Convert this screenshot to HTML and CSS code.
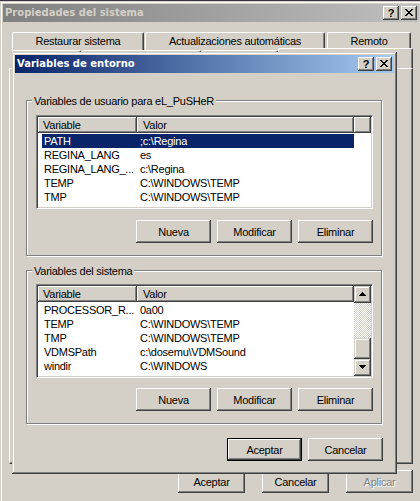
FILE: index.html
```html
<!DOCTYPE html>
<html lang="es">
<head>
<meta charset="utf-8">
<title>Variables de entorno</title>
<link rel="stylesheet" href="styles.css">
</head>
<body>
<div class="desktop">

  <div class="window outer">
    <div class="titlebar inactive">
      <span class="title-text">Propiedades del sistema</span>
      <div class="title-buttons">
        <span class="tbtn help">?</span>
        <span class="tbtn close"><svg width="8" height="7" viewBox="0 0 8 7"><path d="M0 0h2v1H0zM6 0h2v1H6zM1 1h2v1H1zM5 1h2v1H5zM2 2h4v1H2zM3 3h2v1H3zM2 4h4v1H2zM1 5h2v1H1zM5 5h2v1H5zM0 6h2v1H0zM6 6h2v1H6z" fill="#000"/></svg></span>
      </div>
    </div>
    <div class="outer-body">
      <div class="tab-rows">
        <div class="tab-row">
          <div class="tab t1">Restaurar sistema</div>
          <div class="tab t2">Actualizaciones automáticas</div>
          <div class="tab t3">Remoto</div>
        </div>
        <div class="tab-row">
          <div class="tab r2a"></div>
          <div class="tab r2b"></div>
          <div class="tab r2c"></div>
          <div class="tab r2d selected"></div>
        </div>
      </div>
      <div class="tab-panel"></div>
      <div class="outer-buttons">
        <button class="btn">Aceptar</button>
        <button class="btn">Cancelar</button>
        <button class="btn disabled">Aplicar</button>
      </div>
    </div>
  </div>

  <div class="window inner">
    <div class="titlebar active">
      <span class="title-text">Variables de entorno</span>
      <div class="title-buttons">
        <span class="tbtn help">?</span>
        <span class="tbtn close"><svg width="8" height="7" viewBox="0 0 8 7"><path d="M0 0h2v1H0zM6 0h2v1H6zM1 1h2v1H1zM5 1h2v1H5zM2 2h4v1H2zM3 3h2v1H3zM2 4h4v1H2zM1 5h2v1H1zM5 5h2v1H5zM0 6h2v1H0zM6 6h2v1H6z" fill="#000"/></svg></span>
      </div>
    </div>
    <div class="inner-body">

      <div class="group user">
        <span class="group-label">Variables de usuario para eL_PuSHeR</span>
        <div class="listview">
          <div class="lv-main">
            <div class="lv-header">
              <div class="hcell c1">Variable</div>
              <div class="hcell c2">Valor</div>
              <div class="hcell filler"></div>
            </div>
            <div class="lv-rows">
              <div class="row sel"><span class="cell c1">PATH</span><span class="cell c2">;c:\Regina</span></div>
              <div class="row"><span class="cell c1">REGINA_LANG</span><span class="cell c2">es</span></div>
              <div class="row"><span class="cell c1">REGINA_LANG_...</span><span class="cell c2">c:\Regina</span></div>
              <div class="row"><span class="cell c1">TEMP</span><span class="cell c2">C:\WINDOWS\TEMP</span></div>
              <div class="row"><span class="cell c1">TMP</span><span class="cell c2">C:\WINDOWS\TEMP</span></div>
            </div>
          </div>
        </div>
        <div class="btn-row">
          <button class="btn">Nueva</button>
          <button class="btn">Modificar</button>
          <button class="btn">Eliminar</button>
        </div>
      </div>

      <div class="group sys">
        <span class="group-label">Variables del sistema</span>
        <div class="listview">
          <div class="lv-main">
            <div class="lv-header">
              <div class="hcell c1">Variable</div>
              <div class="hcell c2">Valor</div>
            </div>
            <div class="lv-rows">
              <div class="row"><span class="cell c1">PROCESSOR_R...</span><span class="cell c2">0a00</span></div>
              <div class="row"><span class="cell c1">TEMP</span><span class="cell c2">C:\WINDOWS\TEMP</span></div>
              <div class="row"><span class="cell c1">TMP</span><span class="cell c2">C:\WINDOWS\TEMP</span></div>
              <div class="row"><span class="cell c1">VDMSPath</span><span class="cell c2">c:\dosemu\VDMSound</span></div>
              <div class="row"><span class="cell c1">windir</span><span class="cell c2">C:\WINDOWS</span></div>
            </div>
          </div>
          <div class="scrollbar">
            <div class="sb-btn"><svg width="7" height="4" viewBox="0 0 7 4"><path d="M3 0h1v1H3zM2 1h3v1H2zM1 2h5v1H1zM0 3h7v1H0z" fill="#000"/></svg></div>
            <div class="sb-track"></div>
            <div class="sb-thumb"></div>
            <div class="sb-btn"><svg width="7" height="4" viewBox="0 0 7 4"><path d="M0 0h7v1H0zM1 1h5v1H1zM2 2h3v1H2zM3 3h1v1H3z" fill="#000"/></svg></div>
          </div>
        </div>
        <div class="btn-row">
          <button class="btn">Nueva</button>
          <button class="btn">Modificar</button>
          <button class="btn">Eliminar</button>
        </div>
      </div>

      <div class="dialog-buttons">
        <button class="btn default">Aceptar</button>
        <button class="btn">Cancelar</button>
      </div>

    </div>
  </div>

</div>
</body>
</html>
```

FILE: styles.css
```css
* { box-sizing: border-box; }

html, body { margin: 0; padding: 0; }

body {
  width: 420px;
  height: 501px;
  overflow: hidden;
  background: #3a3441;
  font-family: "Liberation Sans", Arial, sans-serif;
  font-size: 11px;
  letter-spacing: -0.25px;
  color: #000;
}

.desktop {
  position: relative;
  width: 420px;
  height: 501px;
  overflow: hidden;
}

/* ---------- windows ---------- */
.window {
  position: absolute;
  display: flex;
  flex-direction: column;
  padding: 3px;
  background: #d4d0c8;
  box-shadow: inset -1px -1px #404040, inset 1px 1px #d4d0c8,
              inset -2px -2px #808080, inset 2px 2px #fff;
}

.outer { left: 0; top: 1px; width: 422px; height: 510px; }
.inner { left: 12px; top: 52px; width: 385px; height: 422px; }

.titlebar {
  flex: none;
  height: 18px;
  display: flex;
  align-items: center;
  padding: 0 2px;
}
.titlebar.active { background: linear-gradient(to right, #0a246a, #a6caf0); }
.titlebar.inactive { background: linear-gradient(to right, #808080, #c0c0c0); }

.title-text {
  flex: 1;
  font-family: "DejaVu Sans", sans-serif;
  font-weight: bold;
  font-size: 10px;
  letter-spacing: 0;
  line-height: 18px;
  white-space: nowrap;
}
.active .title-text { color: #fff; }
.inactive .title-text { color: #d4d0c8; }

.title-buttons { display: flex; gap: 2px; }

.tbtn {
  width: 16px;
  height: 14px;
  display: flex;
  align-items: center;
  justify-content: center;
  background: #d4d0c8;
  box-shadow: inset -1px -1px #404040, inset 1px 1px #fff,
              inset -2px -2px #808080, inset 2px 2px #d4d0c8;
}
.tbtn.help {
  font-family: "Liberation Sans", Arial, sans-serif;
  font-weight: bold;
  font-size: 11px;
  line-height: 14px;
  letter-spacing: 0;
  color: #000;
  padding-bottom: 1px;
}
.tbtn.close svg { display: block; margin-top: -1px; }

/* ---------- outer dialog body ---------- */
.outer-body {
  display: flex;
  flex-direction: column;
  padding: 10px 6px 0;
}

.tab-rows { padding-left: 3px; }

.tab-row { display: flex; height: 18px; }

.tab {
  height: 18px;
  line-height: 17px;
  text-align: center;
  white-space: nowrap;
  background: #d4d0c8;
  border-top: 1px solid #fff;
  border-left: 1px solid #fff;
  border-right: 1px solid #404040;
  border-radius: 2px 2px 0 0;
  box-shadow: inset -1px 0 #808080;
}
.t1 { width: 132px; margin-right: 1px; }
.t2 { width: 180px; margin-right: 2px; }
.t3 { width: 84px; }

.r2a { width: 69px; margin-right: 1px; }
.r2b { width: 119px; margin-right: 1px; }
.r2c { width: 76px; }
.r2d { width: 135px; }
.tab.selected { height: 20px; margin-top: -2px; }

.tab-panel {
  height: 396px;
  background: #d4d0c8;
  border-top: 1px solid #fff;
  border-left: 1px solid #fff;
  border-right: 1px solid #404040;
  border-bottom: 1px solid #404040;
  box-shadow: inset -1px -1px #808080;
}

.outer-buttons {
  display: flex;
  justify-content: flex-end;
  gap: 17px;
  margin-top: 6px;
}
.outer-buttons .btn { width: 67px; }

/* ---------- buttons ---------- */
.btn {
  width: 75px;
  height: 23px;
  padding: 0;
  border: 0;
  margin: 0;
  font: inherit;
  letter-spacing: inherit;
  color: #000;
  background: #d4d0c8;
  box-shadow: inset -1px -1px #404040, inset 1px 1px #fff,
              inset -2px -2px #808080, inset 2px 2px #d4d0c8;
}
.btn.default { border: 1px solid #000; }
.btn.disabled { color: #808080; text-shadow: 1px 1px 0 #fff; }

/* ---------- inner dialog body ---------- */
.inner-body {
  display: flex;
  flex-direction: column;
  padding: 27px 12px 0 11px;
}

.group {
  position: relative;
  display: flex;
  flex-direction: column;
  border: 1px solid #808080;
  box-shadow: inset 1px 1px #fff, 1px 1px #fff;
  padding: 14px 8px 12px 9px;
}
.group.sys { margin-top: 14px; padding-top: 13px; }
.group.sys .btn-row { margin-top: 10px; }

.group-label {
  position: absolute;
  top: -6px;
  left: 5px;
  padding: 0 2px;
  line-height: 13px;
  background: #d4d0c8;
  white-space: nowrap;
}

.btn-row {
  display: flex;
  justify-content: flex-end;
  gap: 6px;
  margin-top: 11px;
}

.dialog-buttons {
  display: flex;
  justify-content: flex-end;
  gap: 6px;
  margin: 14px -1px 0 0;
}

/* ---------- list view ---------- */
.listview {
  height: 94px;
  display: flex;
  padding: 1px;
  background: #fff;
  border: 1px solid;
  border-color: #808080 #fff #fff #808080;
  box-shadow: inset 1px 1px #404040, inset -1px -1px #d4d0c8;
}

.lv-main {
  flex: 1;
  min-width: 0;
  display: flex;
  flex-direction: column;
  overflow: hidden;
}

.lv-header { flex: none; display: flex; height: 16px; }

.hcell {
  height: 16px;
  line-height: 16px;
  white-space: nowrap;
  background: #d4d0c8;
  box-shadow: inset -1px -1px #404040, inset 1px 1px #fff,
              inset -2px -2px #808080;
}
.hcell.c1 { width: 99px; padding-left: 5px; }
.hcell.c2 { width: 217px; padding-left: 6px; }
.hcell.filler { flex: 1; }

.lv-rows { padding-top: 1px; }

.row {
  display: flex;
  width: 312px;
  height: 14px;
  line-height: 14px;
  margin-left: 4px;
  white-space: nowrap;
}
.row.sel { background: #0a246a; color: #fff; }
.cell.c1 { width: 95px; padding-left: 2px; }
.cell.c2 { flex: 1; padding-left: 3px; }

/* ---------- scrollbar ---------- */
.scrollbar {
  flex: none;
  width: 17px;
  display: flex;
  flex-direction: column;
}
.sb-btn, .sb-thumb {
  flex: none;
  background: #d4d0c8;
  box-shadow: inset -1px -1px #404040, inset 1px 1px #d4d0c8,
              inset -2px -2px #808080, inset 2px 2px #fff;
}
.sb-btn {
  height: 17px;
  display: flex;
  align-items: center;
  justify-content: center;
}
.sb-btn svg { display: block; margin: 0 1px 1px 0; }
.sb-track {
  flex: 1;
  background: repeating-conic-gradient(#fff 0 25%, #d4d0c8 0 50%) 0 0 / 2px 2px;
}
.sb-thumb { height: 21px; }
```
